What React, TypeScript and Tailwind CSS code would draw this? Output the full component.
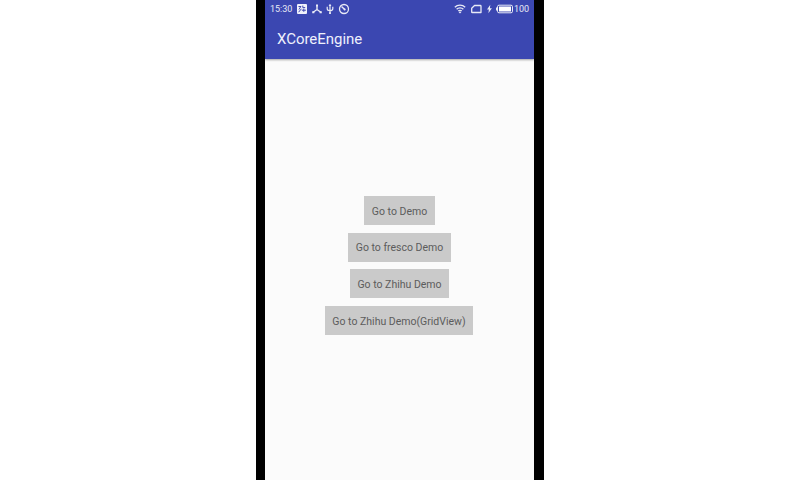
import type { ReactNode } from "react";

const actions = [
  { label: "Go to Demo", size: "w-[71px]" },
  { label: "Go to fresco Demo", size: "w-[103px]" },
  { label: "Go to Zhihu Demo", size: "w-[99px]" },
  { label: "Go to Zhihu Demo(GridView)", size: "w-[148px] mr-px" },
];

function Glyph({ w, children }: { w: number; children: ReactNode }) {
  return (
    <svg width={w} height="12" viewBox={`0 0 ${w} 12`} fill="none" stroke="#e8eaf6" className="shrink-0">
      {children}
    </svg>
  );
}

function StatusBar() {
  return (
    <div className="flex h-[17px] items-center justify-between pr-[5px] pl-[5px] text-[9px] leading-none text-[#e8eaf6]">
      <div className="flex items-center">
        <span className="w-[26px] pt-px whitespace-nowrap">15:30</span>
        <Glyph w={12}>
          <rect x="1" y="1" width="10" height="10" rx="1" fill="#f0f1fb" stroke="none" />
          <path d="M2.5 3.5h2.6M4.8 3.5 3 6.5M5.4 5.8 2.6 9.2M6.8 2.6v2h2.4M5.9 7.2h4M7.8 5.6v3.2" stroke="#3f48b0" strokeWidth="1" />
        </Glyph>
        <div className="w-[3px]" />
        <Glyph w={12}>
          <path d="M6 2v4.5L2.2 9.2M6 6.5l3.8 2.7" strokeWidth="1.4" />
          <path d="M5 1.6h2v2H5zM1.2 8.3h2.2v1.9H1.2zM8.6 8.3h2.2v1.9H8.6z" fill="#e8eaf6" stroke="none" />
        </Glyph>
        <div className="w-[3px]" />
        <Glyph w={8}>
          <path d="M4 1.8v8.4M1.2 3.8v1.9c0 1.4 1.2 1.9 2.8 1.9s2.8-.5 2.8-1.9V3.8" strokeWidth="1.2" />
          <path d="M4 .8 5.4 3H2.6z" fill="#e8eaf6" stroke="none" />
          <path d="M3.1 9.2h1.8v1.7H3.1z" fill="#e8eaf6" stroke="none" />
        </Glyph>
        <div className="w-[4px]" />
        <Glyph w={12}>
          <circle cx="6" cy="6" r="4.5" strokeWidth="1.3" />
          <path d="M3.5 3.5 7 6.8" strokeWidth="1.5" />
          <circle cx="6.6" cy="6.5" r="1" fill="#e8eaf6" stroke="none" />
        </Glyph>
      </div>
      <div className="flex items-center">
        <Glyph w={12}>
          <path d="M.8 4.2a7.4 7.4 0 0 1 10.4 0M2.6 6.2a4.8 4.8 0 0 1 6.8 0M4.3 8a2.4 2.4 0 0 1 3.4 0" strokeWidth="1.3" />
          <path d="M4.7 9.2a1.8 1.8 0 0 1 2.6 0L6 10.6z" fill="#e8eaf6" stroke="none" />
        </Glyph>
        <div className="w-[5px]" />
        <Glyph w={11}>
          <path d="M3.5 2.5h5.8a.7.7 0 0 1 .7.7v6.3H1.2c-.4 0-.5-.3-.5-.6V5.2z" strokeWidth="1.3" strokeLinejoin="round" />
        </Glyph>
        <div className="w-[5px]" />
        <Glyph w={5}>
          <path d="M3.3 1.8 0 6.6h1.9L1.4 10.2l3.5-5H2.9z" fill="#e8eaf6" stroke="none" />
        </Glyph>
        <div className="w-[4px]" />
        <Glyph w={17}>
          <rect x="1.5" y="2.2" width="15" height="7.6" rx="1.5" strokeWidth="1" />
          <rect x="3" y="3.5" width="12" height="5" fill="#ffffff" stroke="none" />
          <path d="M.5 4.5v3" strokeWidth="1" />
        </Glyph>
        <span className="ml-px w-[15px] pt-px whitespace-nowrap">100</span>
      </div>
    </div>
  );
}

export default function App() {
  return (
    <div className="flex h-[480px] w-[800px] justify-center overflow-hidden bg-white font-[Roboto,sans-serif]">
      <div className="flex w-[288px] bg-black pr-[10px] pl-[9px]">
        <div className="flex w-[269px] flex-col bg-[#fbfbfb]">
          <header className="h-[59px] shrink-0 bg-[#3b47b1] shadow-[0_1px_2px_rgba(0,0,0,0.35)]">
            <StatusBar />
            <h1 className="pt-[12px] pl-[12px] text-[15px] leading-[20px] tracking-[-0.03px] text-[#eef0fc]">XCoreEngine</h1>
          </header>
          <main className="flex flex-col items-center gap-[7.6px] pt-[137px]">
            {actions.map(({ label, size }) => (
              <button
                key={label}
                className={`${size} h-[29px] bg-[#cacaca] pt-[3px] text-center text-[10.5px] leading-none whitespace-nowrap text-[#5c5c5c]`}
              >
                {label}
              </button>
            ))}
          </main>
        </div>
      </div>
    </div>
  );
}
